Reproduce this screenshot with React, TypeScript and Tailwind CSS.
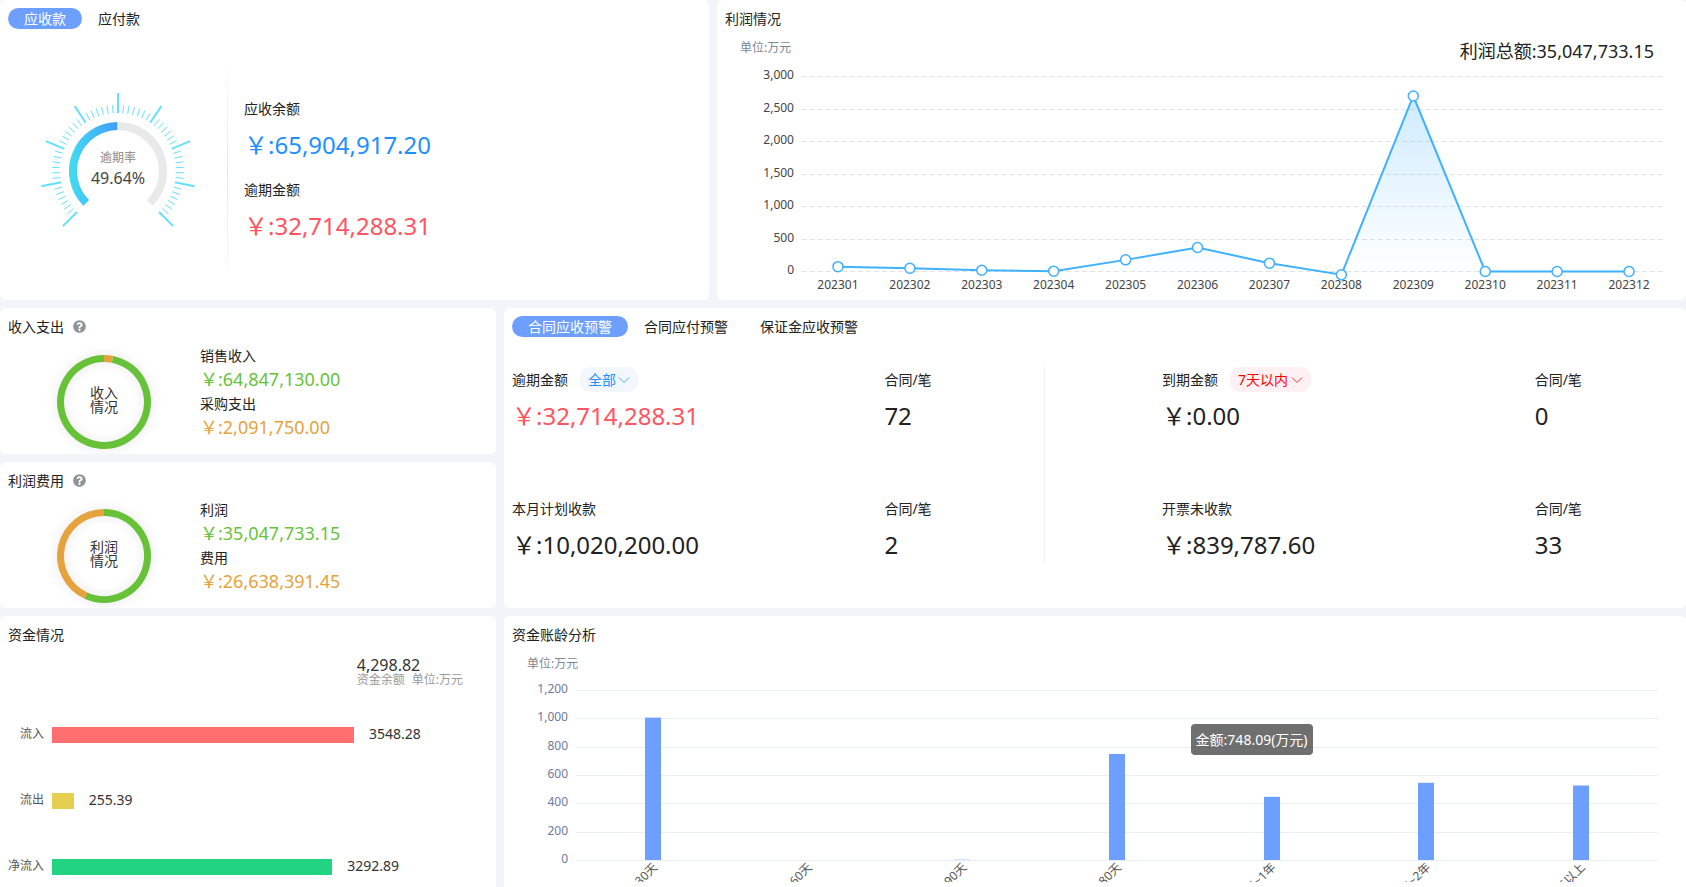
import { useLayoutEffect, useRef, useState } from "react";
import { FaQuestionCircle } from "react-icons/fa";

const GREEN = "#67c23a";
const ORANGE = "#e6a23c";

/* Tracks an element's width so the charts can follow the window */
function useWidth(initial: number) {
  const ref = useRef<HTMLDivElement>(null);
  const [width, setWidth] = useState(initial);
  useLayoutEffect(() => {
    const el = ref.current;
    if (!el) return;
    const update = () => setWidth(el.clientWidth);
    update();
    const observer = new ResizeObserver(update);
    observer.observe(el);
    return () => observer.disconnect();
  }, []);
  return { ref, width };
}

function polar(cx: number, cy: number, r: number, deg: number) {
  const a = (deg * Math.PI) / 180;
  return [cx + r * Math.sin(a), cy - r * Math.cos(a)];
}

/* Angles run clockwise, 0 is straight up */
function arc(cx: number, cy: number, r: number, from: number, to: number) {
  const [x1, y1] = polar(cx, cy, r, from);
  const [x2, y2] = polar(cx, cy, r, to);
  return `M${x1} ${y1}A${r} ${r} 0 ${to - from > 180 ? 1 : 0} 1 ${x2} ${y2}`;
}

function Tabs({ items }: { items: string[] }) {
  const [active, setActive] = useState(items[0]);
  return (
    <div className="flex text-sm">
      {items.map((item) => (
        <button
          key={item}
          type="button"
          onClick={() => setActive(item)}
          className={
            item === active
              ? "h-[21px] rounded-full bg-[#6c9fff] px-4 leading-[21px] text-white"
              : "h-[21px] rounded-full px-4 leading-[21px]"
          }
        >
          {item}
        </button>
      ))}
    </div>
  );
}

function Gauge() {
  const ticks = Array.from({ length: 57 }, (_, i) => ({
    deg: -135 + (i * 270) / 56,
    major: i % 7 === 0,
  }));
  return (
    <svg width="160" height="160" viewBox="0 0 160 160">
      <defs>
        <linearGradient id="gauge" x1="0" y1="0" x2="1" y2="0">
          <stop offset="0" stopColor="#42d8f2" />
          <stop offset="1" stopColor="#409eff" />
        </linearGradient>
      </defs>
      {ticks.map(({ deg, major }) => {
        const [x1, y1] = polar(80, 80, 58, deg);
        const [x2, y2] = polar(80, 80, major ? 78 : 66, deg);
        return <line key={deg} x1={x1} y1={y1} x2={x2} y2={y2} stroke="#63e0fc" strokeWidth={major ? 2 : 1} />;
      })}
      <path d={arc(80, 80, 45, -135, 135)} fill="none" stroke="#e9e9e9" strokeWidth="8" />
      <path d={arc(80, 80, 45, -135, -135 + 270 * 0.4964)} fill="none" stroke="url(#gauge)" strokeWidth="8" />
      <text x="80" y="71" textAnchor="middle" fontSize="12" fill="#888">逾期率</text>
      <text x="80" y="93" textAnchor="middle" fontSize="16" fill="#444">49.64%</text>
    </svg>
  );
}

function BalanceCard() {
  return (
    <section className="flex flex-col rounded-md bg-white p-2">
      <Tabs items={["应收款", "应付款"]} />
      <div className="mt-5 flex flex-1">
        <div className="flex w-[219px] items-center justify-center">
          <Gauge />
        </div>
        <div className="w-px bg-linear-to-b from-white via-gray-200 to-white" />
        <div className="flex flex-col justify-center gap-4 pl-4">
          <div>
            <p className="text-sm leading-[21px]">应收余额</p>
            <p className="mt-2 text-2xl leading-9 text-[#2190ff]">￥:65,904,917.20</p>
          </div>
          <div>
            <p className="text-sm leading-[21px]">逾期金额</p>
            <p className="mt-2 text-2xl leading-9 text-[#ff5561]">￥:32,714,288.31</p>
          </div>
        </div>
      </div>
    </section>
  );
}

const profits = [74, 50, 20, 5, 179, 370, 128, -50, 2700, 0, 0, 0];

function ProfitChart() {
  const { ref, width } = useWidth(953);
  const left = 77;
  const right = width - 13;
  const step = (right - left) / profits.length;
  const y = (v: number) => 206.5 - (v * 195) / 3000;
  const points = profits.map((v, i) => [left + step * (i + 0.5), y(v)]);
  const line = points.map((p) => p.join(",")).join(" ");
  return (
    <div ref={ref} className="h-[227px]">
      <svg width={width} height="227" className="block" fontSize="12">
        <defs>
          <linearGradient id="profit" x1="0" y1="0" x2="0" y2="1">
            <stop offset="0" stopColor="#3fb1ff" stopOpacity="0.25" />
            <stop offset="1" stopColor="#3fb1ff" stopOpacity="0" />
          </linearGradient>
        </defs>
        {[0, 500, 1000, 1500, 2000, 2500, 3000].map((v) => {
          const ly = Math.floor(y(v)) + 0.5;
          return (
            <g key={v}>
              <line x1={left} x2={right} y1={ly} y2={ly} stroke="#e2e2e2" strokeDasharray="5 3" />
              <text x={left - 8} y={ly + 2.5} textAnchor="end" fill="#444">{v.toLocaleString("en-US")}</text>
            </g>
          );
        })}
        <polygon points={`${points[0][0]},206.5 ${line} ${points[11][0]},206.5`} fill="url(#profit)" />
        {points.map(([x], i) => (
          <text key={i} x={x} y="224" textAnchor="middle" fill="#444">{202301 + i}</text>
        ))}
        <polyline points={line} fill="none" stroke="#3fb1ff" strokeWidth="2" />
        {points.map(([x, py], i) => (
          <circle key={i} cx={x} cy={py} r="5" fill="#fff" stroke="#3fb1ff" strokeWidth="1.5" />
        ))}
      </svg>
    </div>
  );
}

function ProfitCard() {
  return (
    <section className="min-w-0 rounded-md bg-white p-2">
      <h2 className="text-sm leading-[21px]">利润情况</h2>
      <div className="mt-2 flex justify-between pr-6 pl-[15px]">
        <span className="text-xs leading-[22px] text-[#7d8794]">单位:万元</span>
        <span className="text-lg leading-7">利润总额:35,047,733.15</span>
      </div>
      <ProfitChart />
    </section>
  );
}

type RingItem = { label: string; amount: string; color: "green" | "orange" };

function RingCard({
  title,
  center,
  split,
  colors,
  items,
}: {
  title: string;
  center: string;
  split: number;
  colors: [string, string];
  items: RingItem[];
}) {
  return (
    <section className="overflow-hidden rounded-md bg-white p-2">
      <h2 className="flex items-center gap-[9px] text-sm leading-[21px]">
        {title}
        <FaQuestionCircle size={13} color="#909399" />
      </h2>
      <div className="mt-2 flex">
        <div className="flex w-48 justify-center">
          <svg width="110" height="101" className="overflow-visible">
            <g className="drop-shadow-[0_0_6px_rgba(0,0,0,0.1)]" fill="none" strokeWidth="7">
              <path d={arc(55, 57, 43.5, 0, split * 360)} stroke={colors[0]} />
              <path d={arc(55, 57, 43.5, split * 360, 360)} stroke={colors[1]} />
            </g>
            <g textAnchor="middle" fontSize="14" fill="#333">
              <text x="55" y="53">{center}</text>
              <text x="55" y="67">情况</text>
            </g>
          </svg>
        </div>
        <dl>
          {items.map((item) => (
            <div key={item.label}>
              <dt className="text-sm leading-[21px]">{item.label}</dt>
              <dd className={item.color === "green" ? "text-lg leading-[27px] text-[#67c23a]" : "text-lg leading-[27px] text-[#e6a23c]"}>
                {item.amount}
              </dd>
            </div>
          ))}
        </dl>
      </div>
    </section>
  );
}

function Filter({ label, options, tone }: { label: string; options: string[]; tone: "blue" | "red" }) {
  return (
    <span
      className={
        tone === "blue"
          ? "relative inline-flex h-[25px] w-[58px] rounded-[10px] bg-[#f2f6ff] text-[#2190ff]"
          : "relative inline-flex h-[25px] w-[81px] rounded-[10px] bg-[#fff1f3] text-[#ff0000]"
      }
    >
      <select aria-label={label} className="w-full cursor-pointer appearance-none bg-transparent pl-2 leading-[25px] outline-none">
        {options.map((o) => (
          <option key={o}>{o}</option>
        ))}
      </select>
      <svg
        className="pointer-events-none absolute top-2 right-2"
        width="12"
        height="10"
        viewBox="0 0 12 10"
        fill="none"
        stroke="currentColor"
        strokeWidth="1"
        opacity="0.8"
      >
        <path d="M1 2.5 6 7.5 11 2.5" />
      </svg>
    </span>
  );
}

function Stat({ label, value, red, children }: { label: string; value: string; red?: boolean; children?: React.ReactNode }) {
  return (
    <div>
      <div className="flex h-[25px] items-center gap-3 text-sm">
        <span>{label}</span>
        {children}
      </div>
      <p className={red ? "mt-1.5 text-2xl leading-9 text-[#ff5561]" : "mt-1.5 text-2xl leading-9"}>{value}</p>
    </div>
  );
}

function WarningCard() {
  return (
    <section className="row-span-2 rounded-md bg-white p-2">
      <Tabs items={["合同应收预警", "合同应付预警", "保证金应收预警"]} />
      <div className="mt-[30px] grid grid-cols-[533fr_633fr]">
        <div className="grid grid-cols-[7fr_3fr] gap-y-[62px] border-r border-[#f0f0f0]">
          <Stat label="逾期金额" value="￥:32,714,288.31" red>
            <Filter label="逾期金额" options={["全部", "7天以内"]} tone="blue" />
          </Stat>
          <Stat label="合同/笔" value="72" />
          <Stat label="本月计划收款" value="￥:10,020,200.00" />
          <Stat label="合同/笔" value="2" />
        </div>
        <div className="grid grid-cols-[13fr_5fr] gap-y-[62px] pl-[117px]">
          <Stat label="到期金额" value="￥:0.00">
            <Filter label="到期金额" options={["7天以内", "全部"]} tone="red" />
          </Stat>
          <Stat label="合同/笔" value="0" />
          <Stat label="开票未收款" value="￥:839,787.60" />
          <Stat label="合同/笔" value="33" />
        </div>
      </div>
    </section>
  );
}

const flows = [
  { label: "流入", value: 3548.28, color: "#ff6f6f" },
  { label: "流出", value: 255.39, color: "#e6ce50" },
  { label: "净流入", value: 3292.89, color: "#22d381" },
];

function FundsCard() {
  return (
    <section className="rounded-t-md bg-white p-2 pb-0">
      <h2 className="text-sm leading-[21px]">资金情况</h2>
      <div className="mt-3 flex justify-end pr-[25px]">
        <div>
          <p className="text-base leading-4 text-[#333]">4,298.82</p>
          <p className="flex gap-[7px] text-xs leading-[14px] text-[#999]">
            <span>资金余额</span>
            <span>单位:万元</span>
          </p>
        </div>
      </div>
      <div className="mt-10 flex flex-col gap-[50px]">
        {flows.map((f) => (
          <div key={f.label} className="flex h-4 items-center gap-2">
            <span className="h-4 w-9 text-right text-xs leading-[14px] whitespace-nowrap text-[#555]">{f.label}</span>
            <div className="flex h-4 flex-1 items-center gap-[15px]">
              <div className="h-4 shrink-0" style={{ width: `${(f.value / 5122) * 100}%`, background: f.color }} />
              <span className="h-4 text-sm leading-[14px] text-[#333]">{f.value}</span>
            </div>
          </div>
        ))}
      </div>
    </section>
  );
}

const ages = [
  { label: "0~30天", value: 1005 },
  { label: "30~60天", value: 0 },
  { label: "60~90天", value: 2 },
  { label: "90~180天", value: 748.09 },
  { label: "180天~1年", value: 446 },
  { label: "1年~2年", value: 545 },
  { label: "2年以上", value: 526 },
];

function AgeChart() {
  const { ref, width } = useWidth(1166);
  const left = 64;
  const right = width - 20;
  const step = (right - left) / ages.length;
  const y = (v: number) => 187.5 - (v * 170) / 1200;
  return (
    <div ref={ref} className="relative h-[209px]">
      <svg width={width} height="209" className="block" fontSize="12">
        {[0, 200, 400, 600, 800, 1000, 1200].map((v) => {
          const ly = Math.floor(y(v)) + 0.5;
          return (
            <g key={v}>
              <line x1={left} x2={right} y1={ly} y2={ly} stroke="#e8eef4" />
              <text x={left - 8} y={ly + 2.5} textAnchor="end" fill="#6e7b9c">{v.toLocaleString("en-US")}</text>
            </g>
          );
        })}
        {ages.map((a, i) => {
          const x = left + step * (i + 0.5);
          return (
            <g key={a.label}>
              <rect x={Math.round(x) - 8} y={y(a.value) - 0.5} width="16" height={187.5 - y(a.value)} fill="#6c9fff" />
              <text transform={`translate(${x + 5} 195) rotate(-45)`} textAnchor="end" fill="#555">{a.label}</text>
            </g>
          );
        })}
      </svg>
      <div className="absolute top-[51px] left-[58.2%] rounded bg-[rgba(50,50,50,0.7)] p-[5px] text-sm leading-[21px] whitespace-nowrap text-white">
        金额:748.09(万元)
      </div>
    </div>
  );
}

function AgeCard() {
  return (
    <section className="min-w-0 rounded-t-md bg-white p-2 pb-0">
      <h2 className="text-sm leading-[21px]">资金账龄分析</h2>
      <p className="mt-2 h-5 pl-[15px] text-xs leading-[22px] text-[#7d8794]">单位:万元</p>
      <AgeChart />
    </section>
  );
}

export default function App() {
  return (
    <main className="flex min-h-screen flex-col gap-2 bg-[#f1f5fa] font-['Noto_Sans','Noto_Sans_CJK_SC',sans-serif] text-[#222]">
      <div className="grid grid-cols-[709fr_969fr] gap-2">
        <BalanceCard />
        <ProfitCard />
      </div>
      <div className="grid flex-1 grid-cols-[496fr_1182fr] grid-rows-[auto_auto_1fr] gap-2">
        <RingCard
          title="收入支出"
          center="收入"
          split={0.0312}
          colors={[ORANGE, GREEN]}
          items={[
            { label: "销售收入", amount: "￥:64,847,130.00", color: "green" },
            { label: "采购支出", amount: "￥:2,091,750.00", color: "orange" },
          ]}
        />
        <WarningCard />
        <RingCard
          title="利润费用"
          center="利润"
          split={0.568}
          colors={[GREEN, ORANGE]}
          items={[
            { label: "利润", amount: "￥:35,047,733.15", color: "green" },
            { label: "费用", amount: "￥:26,638,391.45", color: "orange" },
          ]}
        />
        <FundsCard />
        <AgeCard />
      </div>
    </main>
  );
}
